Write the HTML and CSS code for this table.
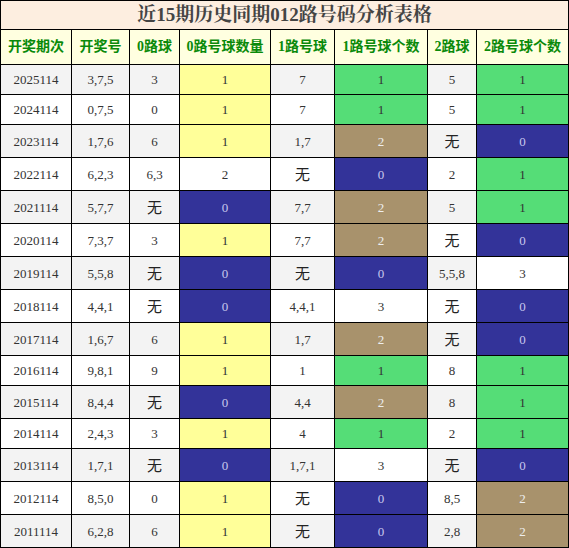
FILE: index.html
```html
<!DOCTYPE html>
<html lang="zh">
<head>
<meta charset="utf-8">
<title>近15期历史同期012路号码分析表格</title>
<link rel="stylesheet" href="styles.css">
</head>
<body>
<table class="tbl">
<colgroup>
<col class="c1"><col class="c2"><col class="c3"><col class="c4"><col class="c5"><col class="c6"><col class="c7"><col class="c8">
</colgroup>
<thead>
<tr class="title-row"><th colspan="8" class="title">近15期历史同期012路号码分析表格</th></tr>
<tr class="head-row">
<th>开奖期次</th><th>开奖号</th><th>0路球</th><th>0路号球数量</th><th>1路号球</th><th>1路号球个数</th><th>2路球</th><th>2路号球个数</th>
</tr>
</thead>
<tbody>
<tr class="g"><td>2025114</td><td>3,7,5</td><td>3</td><td class="y">1</td><td>7</td><td class="gr">1</td><td>5</td><td class="gr">1</td></tr>
<tr class="w"><td>2024114</td><td>0,7,5</td><td>0</td><td class="y">1</td><td>7</td><td class="gr">1</td><td>5</td><td class="gr">1</td></tr>
<tr class="g t"><td>2023114</td><td>1,7,6</td><td>6</td><td class="y">1</td><td>1,7</td><td class="tn">2</td><td><span class="wu">无</span></td><td class="nv">0</td></tr>
<tr class="w t"><td>2022114</td><td>6,2,3</td><td>6,3</td><td class="pl">2</td><td><span class="wu">无</span></td><td class="nv">0</td><td>2</td><td class="gr">1</td></tr>
<tr class="g t"><td>2021114</td><td>5,7,7</td><td><span class="wu">无</span></td><td class="nv">0</td><td>7,7</td><td class="tn">2</td><td>5</td><td class="gr">1</td></tr>
<tr class="w t"><td>2020114</td><td>7,3,7</td><td>3</td><td class="y">1</td><td>7,7</td><td class="tn">2</td><td><span class="wu">无</span></td><td class="nv">0</td></tr>
<tr class="g t"><td>2019114</td><td>5,5,8</td><td><span class="wu">无</span></td><td class="nv">0</td><td><span class="wu">无</span></td><td class="nv">0</td><td>5,5,8</td><td class="pl">3</td></tr>
<tr class="w t"><td>2018114</td><td>4,4,1</td><td><span class="wu">无</span></td><td class="nv">0</td><td>4,4,1</td><td class="pl">3</td><td><span class="wu">无</span></td><td class="nv">0</td></tr>
<tr class="g t"><td>2017114</td><td>1,6,7</td><td>6</td><td class="y">1</td><td>1,7</td><td class="tn">2</td><td><span class="wu">无</span></td><td class="nv">0</td></tr>
<tr class="w"><td>2016114</td><td>9,8,1</td><td>9</td><td class="y">1</td><td>1</td><td class="gr">1</td><td>8</td><td class="gr">1</td></tr>
<tr class="g t"><td>2015114</td><td>8,4,4</td><td><span class="wu">无</span></td><td class="nv">0</td><td>4,4</td><td class="tn">2</td><td>8</td><td class="gr">1</td></tr>
<tr class="w"><td>2014114</td><td>2,4,3</td><td>3</td><td class="y">1</td><td>4</td><td class="gr">1</td><td>2</td><td class="gr">1</td></tr>
<tr class="g t"><td>2013114</td><td>1,7,1</td><td><span class="wu">无</span></td><td class="nv">0</td><td>1,7,1</td><td class="pl">3</td><td><span class="wu">无</span></td><td class="nv">0</td></tr>
<tr class="w t"><td>2012114</td><td>8,5,0</td><td>0</td><td class="y">1</td><td><span class="wu">无</span></td><td class="nv">0</td><td>8,5</td><td class="tn">2</td></tr>
<tr class="g t"><td>2011114</td><td>6,2,8</td><td>6</td><td class="y">1</td><td><span class="wu">无</span></td><td class="nv">0</td><td>2,8</td><td class="tn">2</td></tr>
</tbody>
</table>
</body>
</html>
```
FILE: styles.css
```css
html, body {
  margin: 0;
  padding: 0;
  background: #ffffff;
}
.tbl {
  width: 569px;
  border-collapse: collapse;
  table-layout: fixed;
  font-family: "Liberation Serif", "Noto Sans CJK SC", serif;
  font-size: 13px;
  color: #333333;
}
.c1 { width: 71px; }
.c2 { width: 58px; }
.c3 { width: 50px; }
.c4 { width: 91px; }
.c5 { width: 64px; }
.c6 { width: 93px; }
.c7 { width: 49px; }
.c8 { width: 92px; }
.tbl th, .tbl td {
  border: 1px solid #000000;
  padding: 0;
  text-align: center;
  vertical-align: middle;
}
.title-row { height: 29px; }
.title {
  background: #fdeee0;
  color: #444444;
  font-family: "Liberation Serif", "Noto Serif CJK SC", "Noto Sans CJK SC", serif;
  font-size: 19px;
  font-weight: bold;
  line-height: 20px;
}
.head-row { height: 35px; }
.head-row th {
  background: #ffffe0;
  color: #0a8a0a;
  font-size: 14px;
  font-weight: bold;
  line-height: 16px;
}
tbody tr { height: 30px; }
tbody tr.t { height: 33px; }
tbody td { line-height: 15px; }
tr.g td { background: #f3f3f3; }
tr.w td { background: #ffffff; }
.wu {
  font-family: "Noto Sans CJK SC", sans-serif;
  font-size: 15px;
  line-height: 15px;
  color: #222222;
}
tr td.y { background: #ffff99; color: #333333; }
tr td.gr { background: #55dd77; color: #333333; }
tr td.tn { background: #a8926c; color: #eeeeee; }
tr td.nv { background: #333399; color: #c8c8ee; }
tr td.pl { background: #ffffff; color: #333333; }
```
